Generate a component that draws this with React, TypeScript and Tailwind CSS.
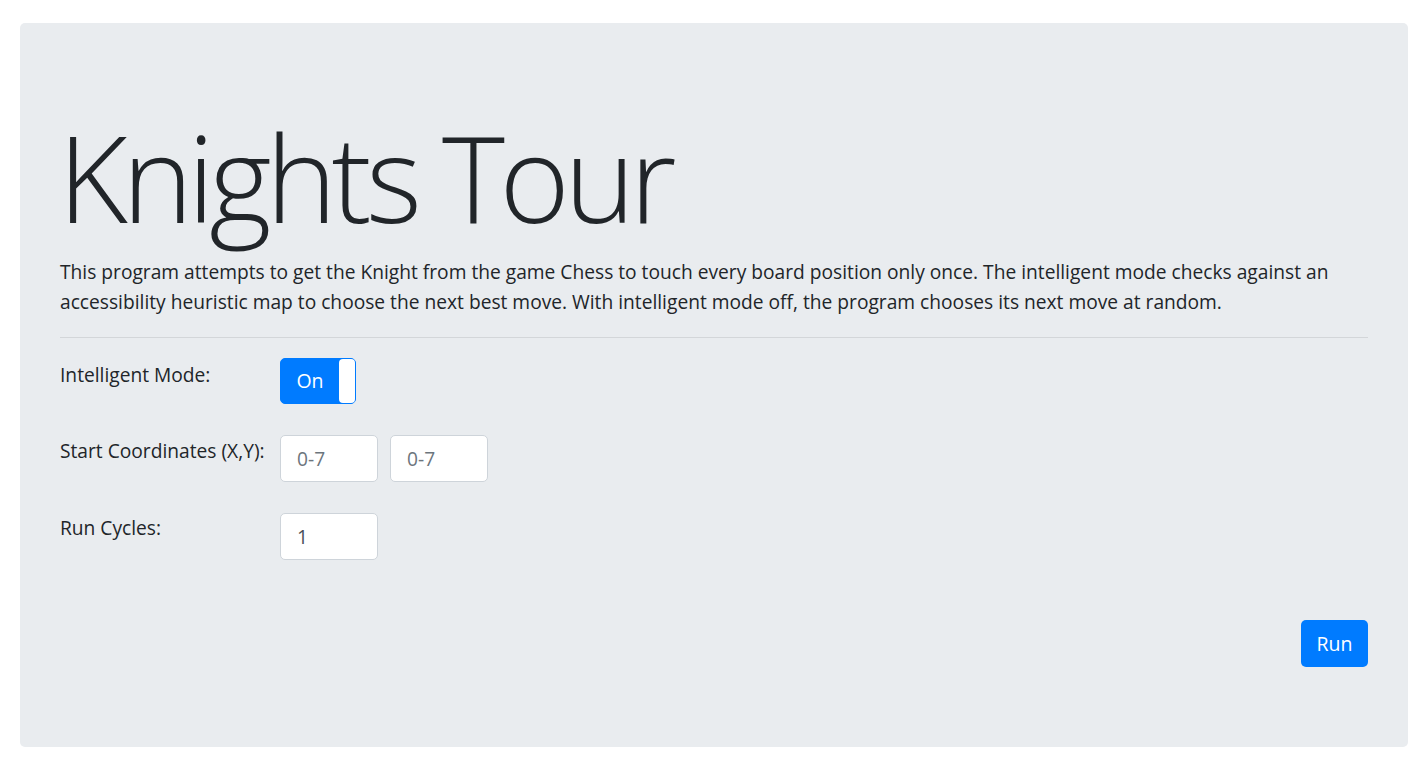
import React from "react";

export default function App() {
  return (
    <div className="min-h-screen bg-white pt-[23px] pl-[20px] pr-[19px] pb-[20px]" style={{ fontFamily: '"Open Sans", "Noto Sans", sans-serif' }}>
      <div className="bg-[#e9ecef] rounded-[5px] h-[724px] px-[40px] pt-[82px] text-[#212529]">
        <h1 className="text-[120px] font-light leading-[144px] tracking-[-5.5px] m-0 -ml-[2px]">Knights Tour</h1>
        <p className="text-[19.2px] leading-[30px] mt-[8px]">
          This program attempts to get the Knight from the game Chess to touch every board position only once. The intelligent mode checks against an accessibility heuristic map to choose the next best move. With intelligent mode off, the program chooses its next move at random.
        </p>
        <hr className="mt-[20px] border-0 border-t border-[#d3d6d9]" />
        <div className="mt-[20px] grid grid-cols-[220px_1fr] gap-y-[31px] text-[19.2px] leading-[30px]">
          <div className="pt-[2px]">Intelligent Mode:</div>
          <div>
            <div className="w-[76px] h-[46px] rounded-[5px] bg-[#007bff] border border-[#007bff] flex items-center">
              <span className="flex-1 text-center text-white text-[19.5px]">On</span>
              <span className="w-[16px] h-[44px] bg-white rounded-[4px]" />
            </div>
          </div>
          <div className="pt-[1px]">Start Coordinates (X,Y):</div>
          <div className="flex gap-[12px]">
            <input placeholder="0-7" className="w-[98px] h-[47px] bg-white border border-[#ced4da] rounded-[5px] px-[16px] text-[19.2px] text-[#495057] placeholder:text-[#6c757d] outline-none" />
            <input placeholder="0-7" className="w-[98px] h-[47px] bg-white border border-[#ced4da] rounded-[5px] px-[16px] text-[19.2px] text-[#495057] placeholder:text-[#6c757d] outline-none" />
          </div>
          <div>Run Cycles:</div>
          <div>
            <input defaultValue="1" className="w-[98px] h-[47px] bg-white border border-[#ced4da] rounded-[5px] px-[16px] text-[19.2px] text-[#495057] outline-none" />
          </div>
        </div>
        <div className="flex justify-end mt-[60px]">
          <button className="w-[67px] h-[47px] rounded-[5px] bg-[#007bff] text-white text-[19.5px]">Run</button>
        </div>
      </div>
    </div>
  );
}
